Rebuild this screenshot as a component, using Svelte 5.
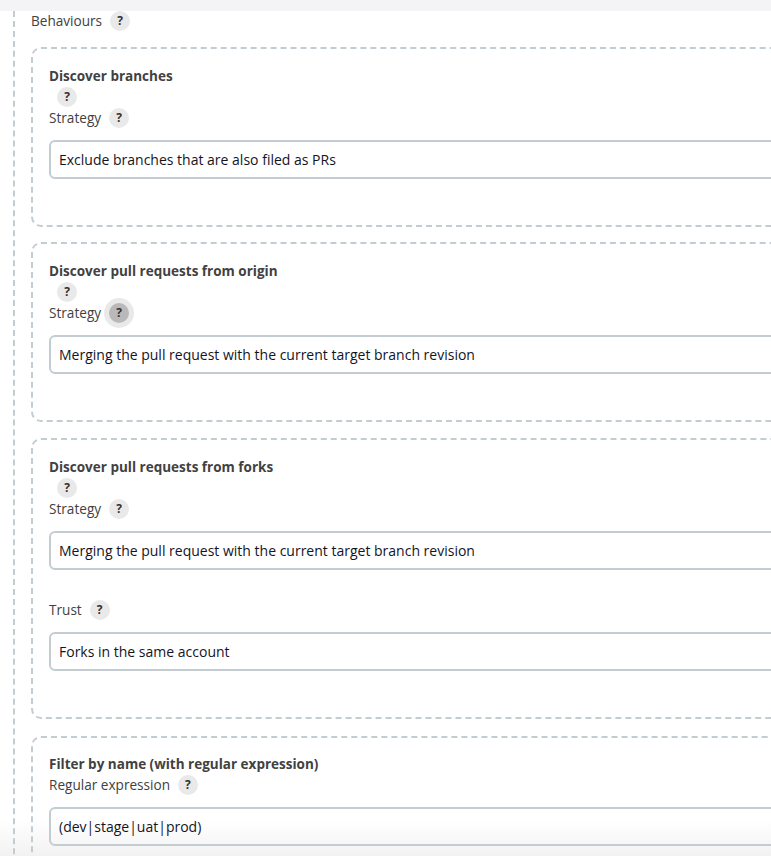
<script>
  const cards = [
    {
      title: 'Discover branches',
      help: true,
      fields: [{ label: 'Strategy', value: 'Exclude branches that are also filed as PRs' }]
    },
    {
      title: 'Discover pull requests from origin',
      help: true,
      fields: [{ label: 'Strategy', value: 'Merging the pull request with the current target branch revision', active: true }]
    },
    {
      title: 'Discover pull requests from forks',
      help: true,
      fields: [
        { label: 'Strategy', value: 'Merging the pull request with the current target branch revision' },
        { label: 'Trust', value: 'Forks in the same account' }
      ]
    },
    {
      title: 'Filter by name (with regular expression)',
      help: false,
      fields: [{ label: 'Regular expression', value: '(dev|stage|uat|prod)' }]
    }
  ];
</script>

<div class="page">
  <div class="fade"></div>
  <div class="topbar"></div>
  <div class="section">
    <div class="label-row top">
      <span>Behaviours</span>
      <span class="help">?</span>
    </div>
    {#each cards as card}
      <div class="card" class:plain={!card.help}>
        <div class="title">{card.title}</div>
        {#if card.help}
          <div class="title-help"><span class="help">?</span></div>
        {/if}
        {#each card.fields as field}
          <div class="field">
            <div class="label-row">
              <span>{field.label}</span>
              <span class="help" class:active={field.active}>?</span>
            </div>
            <div class="input">{field.value}</div>
          </div>
        {/each}
      </div>
    {/each}
  </div>
</div>

<style>
  :global(body) {
    margin: 0;
    background: #fff;
    overflow: hidden;
  }

  .page {
    position: relative;
    width: 771px;
    height: 856px;
    overflow: hidden;
    font-family: "Open Sans", "Noto Sans", sans-serif;
    font-size: 13.6px;
    line-height: 20px;
    color: #414141;
  }

  .topbar {
    height: 11px;
    background: #f4f4f6;
  }

  .section {
    position: relative;
    width: 900px;
    margin-left: 13px;
    padding-left: 16px;
    border-left: 2px dashed #c3ccd1;
  }

  .label-row {
    display: flex;
    align-items: center;
    gap: 8px;
    height: 20px;
  }

  .label-row.top {
    margin-bottom: 15.8px;
  }

  .card {
    border: 2px dashed #c3ccd1;
    border-radius: 10px;
    padding: 17px 16px 46px;
    margin-bottom: 15.5px;
  }

  .card.plain {
    margin-top: 17px;
    padding-top: 16px;
  }

  .card.plain .label-row {
    margin-top: 1px;
  }

  .title {
    font-size: 13.5px;
    font-weight: 700;
  }

  .title-help {
    height: 20px;
    padding-left: 8px;
  }

  .field + .field {
    margin-top: 30px;
  }

  .field .label-row {
    margin: 2px 0 12px;
  }

  .help {
    display: inline-flex;
    align-items: center;
    justify-content: center;
    width: 20px;
    height: 20px;
    border-radius: 50%;
    background: #e9e9e9;
    font-size: 12px;
    font-weight: 700;
    color: #333;
  }

  .help.active {
    background: #b9b9b9;
    box-shadow: 0 0 0 5px #e9e9e9;
  }

  .input {
    height: 35px;
    line-height: 35px;
    padding: 0 8px;
    border: 2px solid #c3ccd1;
    border-radius: 6px;
    font-size: 14px;
    color: #14141f;
  }

  .fade {
    position: absolute;
    left: 0;
    right: 0;
    bottom: 0;
    height: 36px;
    background: linear-gradient(rgba(242, 242, 242, 0), #f2f2f2);
  }
</style>
